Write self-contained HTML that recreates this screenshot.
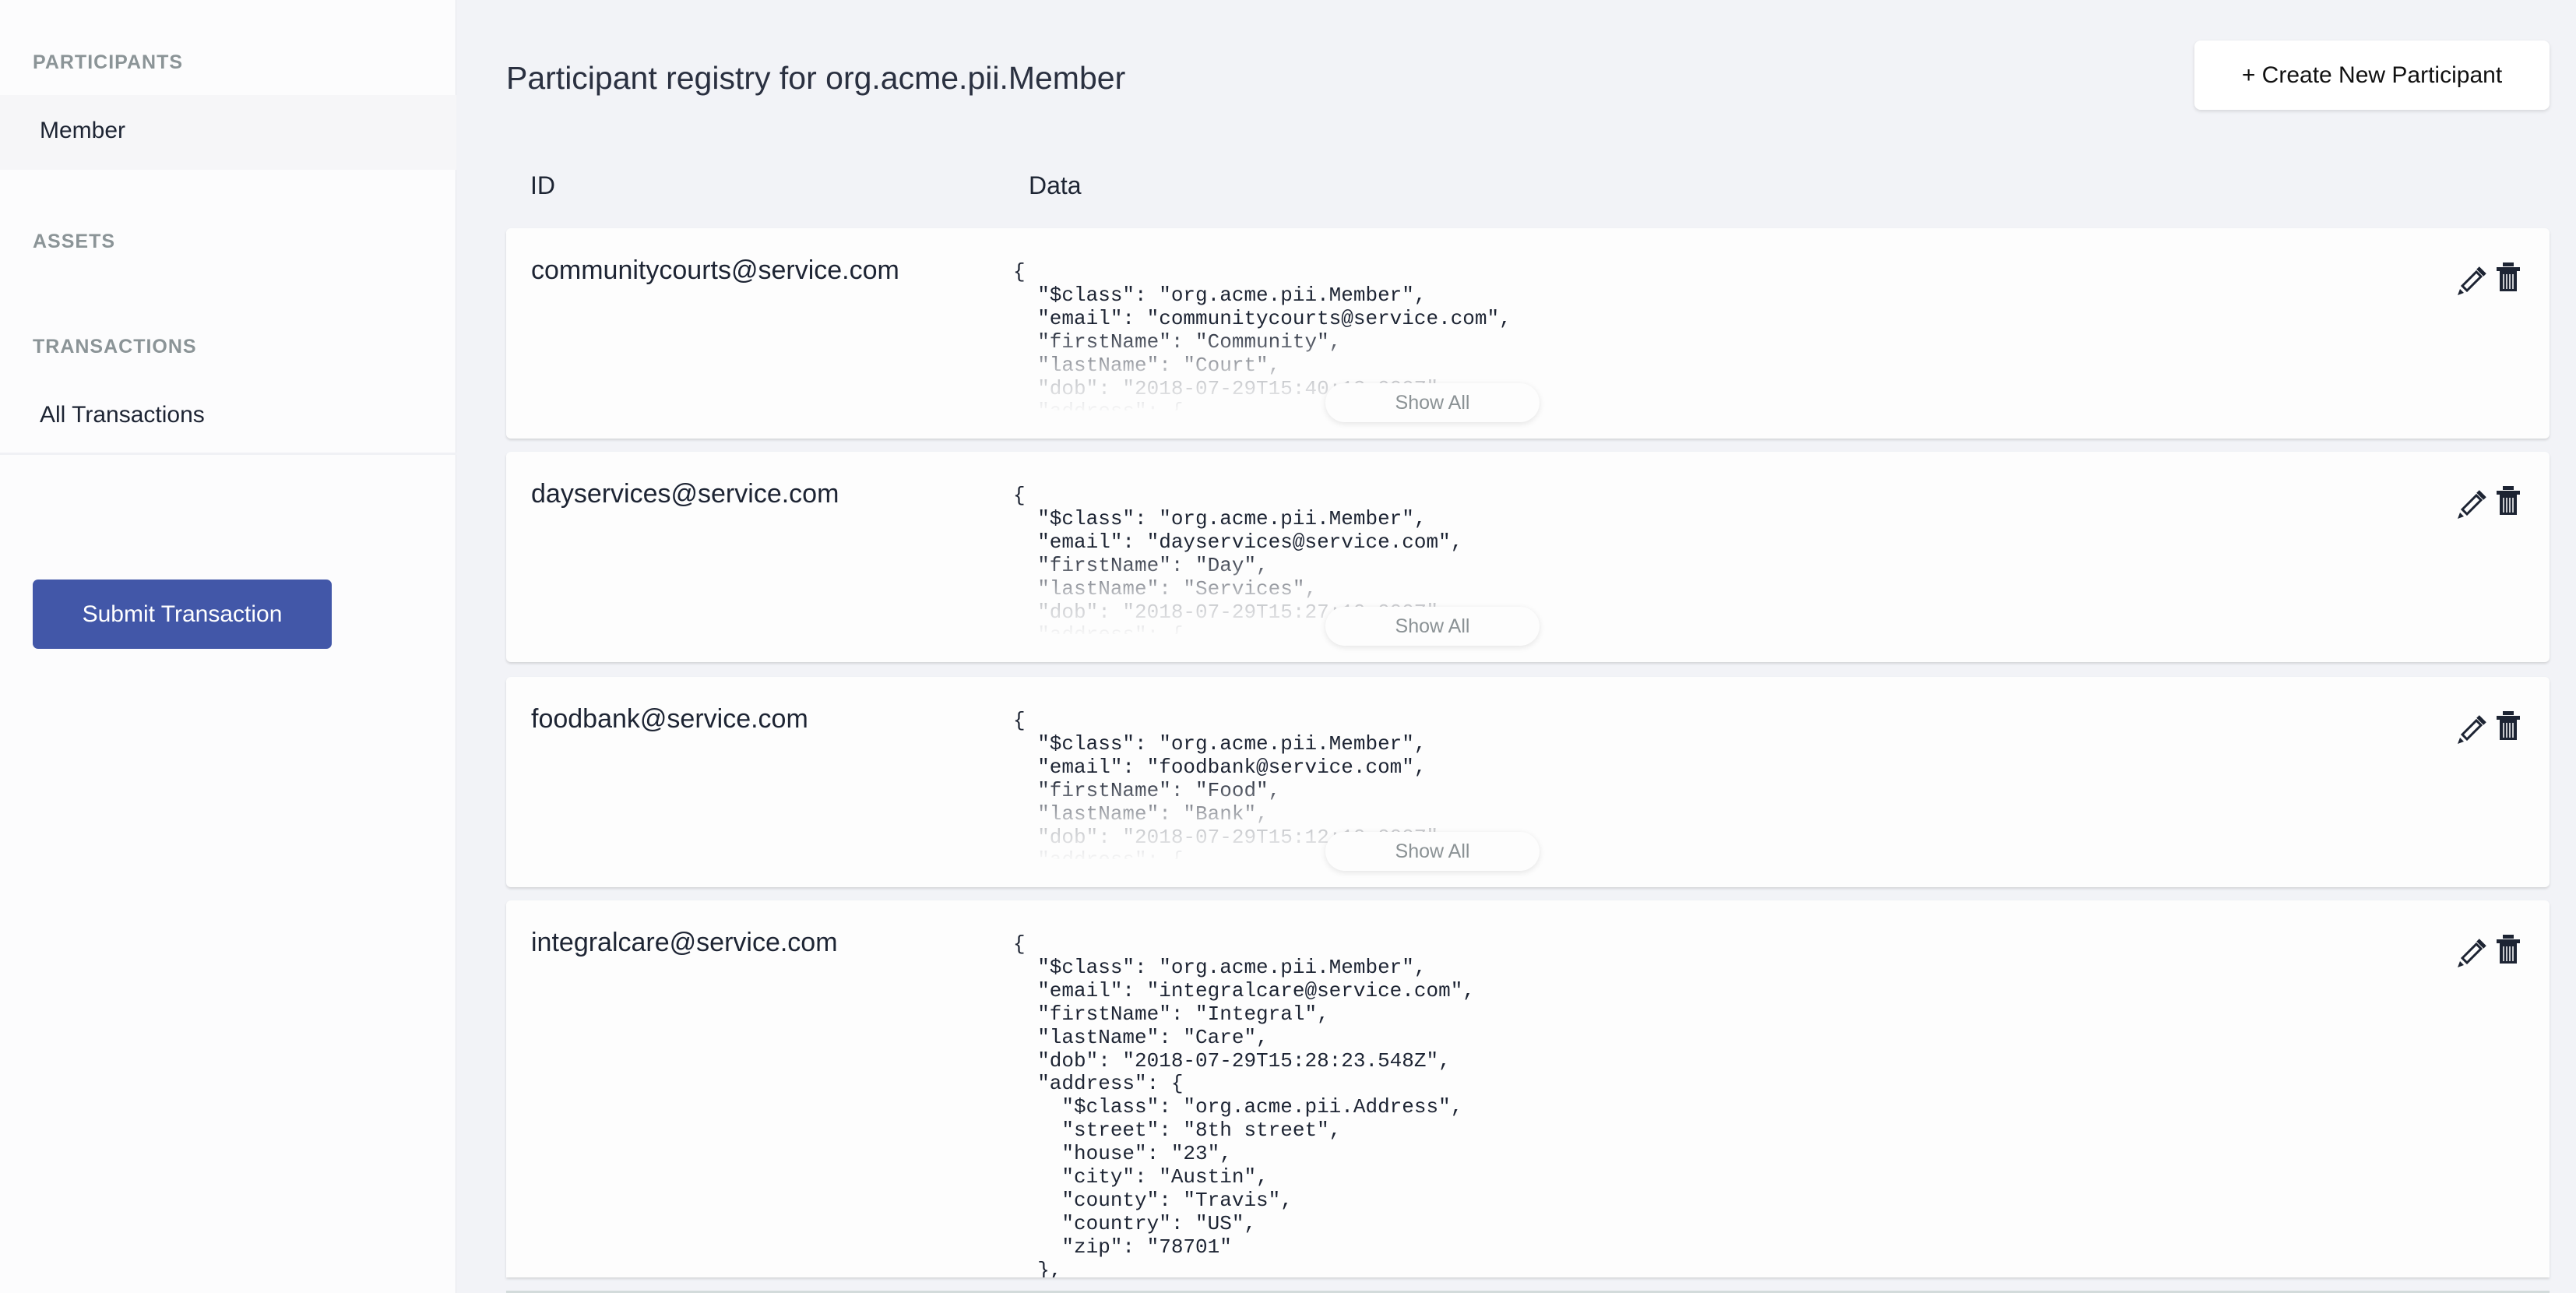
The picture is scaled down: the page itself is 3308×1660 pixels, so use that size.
<!DOCTYPE html>
<html><head><meta charset="utf-8"><style>
*{margin:0;padding:0;box-sizing:border-box}
body{width:3308px;height:1660px;background:#f2f3f7;font-family:"Liberation Sans",sans-serif;position:relative;overflow:hidden;color:#1d2433}
.side{position:absolute;left:0;top:0;width:586px;height:1660px;background:#fcfcfd;border-right:1px solid #e6e8ee}
.sh{position:absolute;left:42px;font-size:25px;font-weight:bold;color:#8b9497;letter-spacing:1px}
.si{position:absolute;left:51px;font-size:30px;color:#1d2433}
.sel{position:absolute;left:0;top:122px;width:586px;height:96px;background:#f6f6f8}
.line{position:absolute;left:0;top:581px;width:586px;height:3px;background:#f0f1f5}
.sub{position:absolute;left:42px;top:744px;width:384px;height:89px;background:#4257a8;border-radius:7px;color:#fff;font-size:30px;text-align:center;line-height:89px}
.title{position:absolute;left:650px;top:77px;font-size:41px;color:#2a3040;font-weight:300}
.create{position:absolute;left:2818px;top:52px;width:456px;height:89px;background:#fff;border-radius:8px;box-shadow:0 2px 5px rgba(0,0,0,.12);font-size:30px;text-align:center;line-height:89px;color:#111}
.hd{position:absolute;top:220px;font-size:32px;color:#1d2433}
.card{position:absolute;left:650px;width:2624px;background:#fdfdfd;border-radius:6px;box-shadow:0 2px 3px rgba(0,0,0,.13);overflow:hidden}
.id{position:absolute;left:32px;top:35px;font-size:34px;color:#1d2433}
pre{position:absolute;left:651px;top:42px;font-family:"Liberation Mono",monospace;font-size:26px;line-height:29.9px;color:#1d2433}
.clip{position:absolute;left:651px;top:42px;width:1860px;height:192px;overflow:hidden}
.clip pre{left:0;top:0}
.fade{position:absolute;left:0;top:90px;width:100%;height:102px;background:linear-gradient(rgba(253,253,253,.05),rgba(253,253,253,.7) 50%,rgba(253,253,253,.97))}
.show{position:absolute;left:1052px;top:199px;width:275px;height:50px;border-radius:25px;background:#fdfdfd;box-shadow:0 2px 8px rgba(0,0,0,.1);text-align:center;line-height:50px;font-size:25px;color:#8b9295}
.ic{position:absolute;left:2500px;top:44px}
</style></head><body>
<div class="side">
<div class="sh" style="top:66px">PARTICIPANTS</div>
<div class="sel"></div>
<div class="si" style="top:151px">Member</div>
<div class="sh" style="top:296px">ASSETS</div>
<div class="sh" style="top:431px">TRANSACTIONS</div>
<div class="si" style="top:516px">All Transactions</div>
<div class="line"></div>
<div class="sub">Submit Transaction</div>
</div>
<div class="title">Participant registry for org.acme.pii.Member</div>
<div class="create">+ Create New Participant</div>
<div class="hd" style="left:681px">ID</div>
<div class="hd" style="left:1321px">Data</div>

<div class="card" style="top:293px;height:270px">
<div class="id">communitycourts@service.com</div>
<div class="clip"><pre>{
  "$class": "org.acme.pii.Member",
  "email": "communitycourts@service.com",
  "firstName": "Community",
  "lastName": "Court",
  "dob": "2018-07-29T15:40:12.000Z",
  "address": {</pre><div class="fade"></div></div>
<div class="show">Show All</div>
<svg class="ic" width="90" height="45" viewBox="0 0 90 45"><g fill="none" stroke="#1d2433" stroke-width="3"><path d="M12 30 L30 12 L36 18 L18 36 Z"/><path d="M32 7 L41 16" stroke-width="5"/></g><path d="M6 42 L9 34 L14 39 Z" fill="#1d2433"/><rect x="64" y="0" width="14" height="5" fill="#1d2433"/><rect x="56" y="6" width="30" height="5" fill="#1d2433"/><rect x="60" y="11" width="22" height="26" fill="#1d2433"/><g stroke="#fff" stroke-width="1.5"><path d="M65 15V34M69 15V34M73 15V34M77 15V34"/></g></svg>
</div>

<div class="card" style="top:580px;height:270px">
<div class="id">dayservices@service.com</div>
<div class="clip"><pre>{
  "$class": "org.acme.pii.Member",
  "email": "dayservices@service.com",
  "firstName": "Day",
  "lastName": "Services",
  "dob": "2018-07-29T15:27:10.000Z",
  "address": {</pre><div class="fade"></div></div>
<div class="show">Show All</div>
<svg class="ic" width="90" height="45" viewBox="0 0 90 45"><g fill="none" stroke="#1d2433" stroke-width="3"><path d="M12 30 L30 12 L36 18 L18 36 Z"/><path d="M32 7 L41 16" stroke-width="5"/></g><path d="M6 42 L9 34 L14 39 Z" fill="#1d2433"/><rect x="64" y="0" width="14" height="5" fill="#1d2433"/><rect x="56" y="6" width="30" height="5" fill="#1d2433"/><rect x="60" y="11" width="22" height="26" fill="#1d2433"/><g stroke="#fff" stroke-width="1.5"><path d="M65 15V34M69 15V34M73 15V34M77 15V34"/></g></svg>
</div>

<div class="card" style="top:869px;height:270px">
<div class="id">foodbank@service.com</div>
<div class="clip"><pre>{
  "$class": "org.acme.pii.Member",
  "email": "foodbank@service.com",
  "firstName": "Food",
  "lastName": "Bank",
  "dob": "2018-07-29T15:12:10.000Z",
  "address": {</pre><div class="fade"></div></div>
<div class="show">Show All</div>
<svg class="ic" width="90" height="45" viewBox="0 0 90 45"><g fill="none" stroke="#1d2433" stroke-width="3"><path d="M12 30 L30 12 L36 18 L18 36 Z"/><path d="M32 7 L41 16" stroke-width="5"/></g><path d="M6 42 L9 34 L14 39 Z" fill="#1d2433"/><rect x="64" y="0" width="14" height="5" fill="#1d2433"/><rect x="56" y="6" width="30" height="5" fill="#1d2433"/><rect x="60" y="11" width="22" height="26" fill="#1d2433"/><g stroke="#fff" stroke-width="1.5"><path d="M65 15V34M69 15V34M73 15V34M77 15V34"/></g></svg>
</div>

<div class="card" style="top:1156px;height:484px;border-radius:6px 6px 0 0">
<div class="id">integralcare@service.com</div>
<pre>{
  "$class": "org.acme.pii.Member",
  "email": "integralcare@service.com",
  "firstName": "Integral",
  "lastName": "Care",
  "dob": "2018-07-29T15:28:23.548Z",
  "address": {
    "$class": "org.acme.pii.Address",
    "street": "8th street",
    "house": "23",
    "city": "Austin",
    "county": "Travis",
    "country": "US",
    "zip": "78701"
  },</pre>
<svg class="ic" width="90" height="45" viewBox="0 0 90 45"><g fill="none" stroke="#1d2433" stroke-width="3"><path d="M12 30 L30 12 L36 18 L18 36 Z"/><path d="M32 7 L41 16" stroke-width="5"/></g><path d="M6 42 L9 34 L14 39 Z" fill="#1d2433"/><rect x="64" y="0" width="14" height="5" fill="#1d2433"/><rect x="56" y="6" width="30" height="5" fill="#1d2433"/><rect x="60" y="11" width="22" height="26" fill="#1d2433"/><g stroke="#fff" stroke-width="1.5"><path d="M65 15V34M69 15V34M73 15V34M77 15V34"/></g></svg>
</div>
<div style="position:absolute;left:650px;top:1657px;width:2624px;height:3px;background:#d3dbdb"></div>
</body></html>
